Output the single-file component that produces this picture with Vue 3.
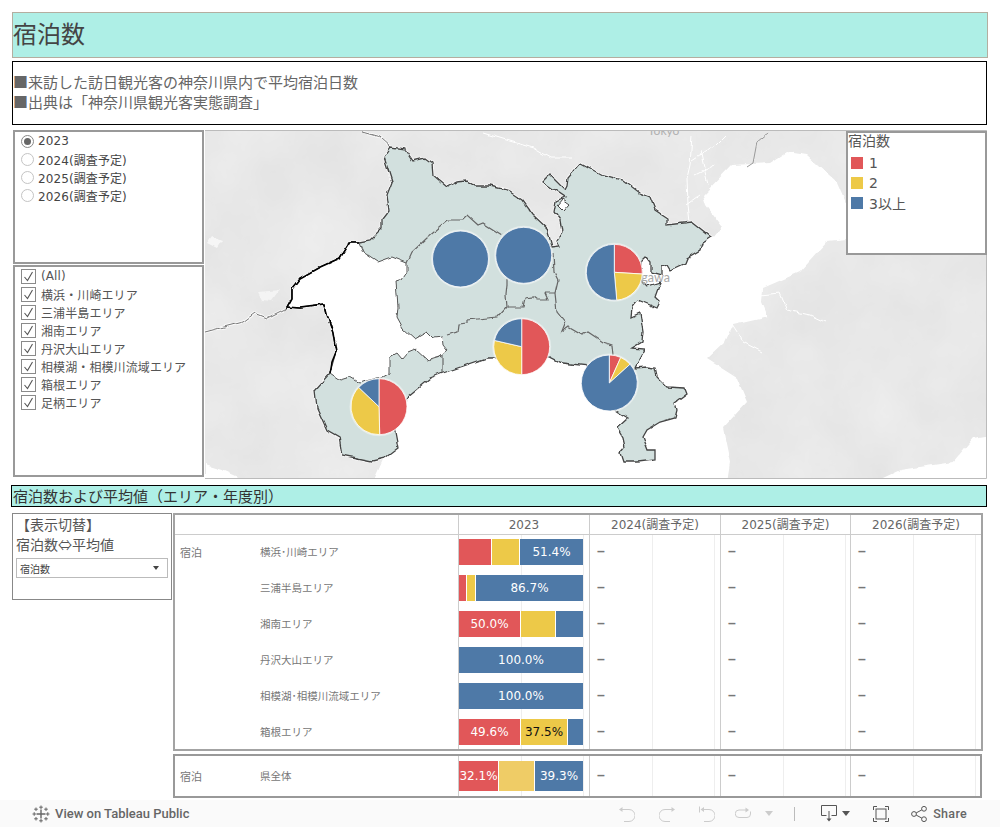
<script setup>
const years = ["2024(調査予定)", "2025(調査予定)", "2026(調査予定)"];

const areas = [
  "横浜・川崎エリア",
  "三浦半島エリア",
  "湘南エリア",
  "丹沢大山エリア",
  "相模湖・相模川流域エリア",
  "箱根エリア",
  "足柄エリア",
];

const legend = [
  { label: "1", color: "#e15759" },
  { label: "2", color: "#edc948" },
  { label: "3以上", color: "#4e79a7" },
];

const rows = [
  { group: "宿泊", name: "横浜･川崎エリア", segs: [{ w: 32, c: "red" }, { w: 27, c: "yellow" }, { w: 63, c: "blue", t: "51.4%" }] },
  { name: "三浦半島エリア", segs: [{ w: 7, c: "red" }, { w: 8, c: "yellow" }, { w: 107, c: "blue", t: "86.7%" }] },
  { name: "湘南エリア", segs: [{ w: 61, c: "red", t: "50.0%" }, { w: 34, c: "yellow" }, { w: 27, c: "blue" }] },
  { name: "丹沢大山エリア", segs: [{ w: 124, c: "blue", t: "100.0%" }] },
  { name: "相模湖･相模川流域エリア", segs: [{ w: 124, c: "blue", t: "100.0%" }] },
  { name: "箱根エリア", segs: [{ w: 61, c: "red", t: "49.6%" }, { w: 46, c: "yellow", t: "37.5%" }, { w: 15, c: "blue" }] },
];

const total = [{ w: 39, c: "red", t: "32.1%" }, { w: 35, c: "pale", t: "" }, { w: 48, c: "blue", t: "39.3%" }];

const colors = ["#e15759", "#edc948", "#4e79a7"];

const pies = [
  { x: 460.5, y: 259, parts: [0, 0, 100] },
  { x: 523.7, y: 255.3, parts: [0, 0, 100] },
  { x: 614.3, y: 272.3, parts: [26, 22.6, 51.4] },
  { x: 521.7, y: 346.7, parts: [50, 28.6, 21.4] },
  { x: 379, y: 406.7, parts: [49.6, 37.5, 12.9] },
  { x: 609.3, y: 383, parts: [6.7, 6.6, 86.7] },
];

const R = 28;

const slices = (pie) => {
  let from = 0;
  const out = [];
  pie.parts.forEach((p, i) => {
    if (!p) return;
    if (p === 100) {
      // a single arc with the same start and end draws nothing
      out.push({
        d: `M${pie.x} ${pie.y - R}A${R} ${R} 0 1 1 ${pie.x} ${pie.y + R}A${R} ${R} 0 1 1 ${pie.x} ${pie.y - R}Z`,
        fill: colors[i],
      });
      return;
    }
    const to = from + (p / 100) * Math.PI * 2;
    const x1 = pie.x + R * Math.sin(from);
    const y1 = pie.y - R * Math.cos(from);
    const x2 = pie.x + R * Math.sin(to);
    const y2 = pie.y - R * Math.cos(to);
    const large = p > 50 ? 1 : 0;
    out.push({
      d: `M${pie.x} ${pie.y}L${x1} ${y1}A${R} ${R} 0 ${large} 1 ${x2} ${y2}Z`,
      fill: colors[i],
    });
    from = to;
  });
  return out;
};

const kanagawa =
  "M359 242L370 240 382 228 382 220 389 211 387 195 392 182 384 157 391 147 405 149 413 161 425 158 432 163 433 175 447 187 457 182 467 181 475 186 490 186 507 190 522 200 533 215 547 228 552 247 560 246 557 240 562 232 560 220 554 212 556 201 565 197 543 182 550 175 565 190 567 186 568 178 581 163 603 175 623 180 640 193 650 197 655 210 667 218 667 225 692 222 711 237 702 243 700 250 687 258 685 263 670 270 667 265 662 267 662 275 651 272 651 262 646 256 641 261 642 282 647 287 660 283 655 297 660 302 657 308 650 305 638 300 632 307 631 317 640 313 643 332 642 342 632 348 645 349 638 362 635 368 647 367 655 368 657 377 667 387 685 388 687 393 675 402 677 410 675 418 660 422 647 430 643 437 648 450 655 450 655 460 638 462 623 462 620 453 625 447 623 438 617 428 628 418 618 412 600 400 590 366 562 363 550 357 487 358 443 373 430 378 413 392 407 397 395 410 395 432 398 448 385 458 372 461 342 455 339 437 327 430 317 408 315 390 330 373 336 352 333 333 328 317 325 305 300 308 287 307 292 298 292 288 300 278 318 268 340 258 350 242Z";

const hole =
  "M350 242L359 242 363 252 378 262 392 257 407 263 407 272 402 280 396 282 398 307 397 317 403 328 415 339 427 332 432 337 442 336 443 345 447 350 440 356 427 360 415 349 408 352 402 359 397 353 390 357 390 373 383 377 375 378 360 383 350 377 340 380 330 373 336 352 333 333 328 317 325 305 300 308 287 307 292 298 292 288 300 278 318 268 340 258Z";

const westEdge =
  "M359 242L350 242 340 258 318 268 300 278 292 288 292 298 287 307 300 308 325 305 328 317 333 333 336 352 332 362 330 373";

const water =
  "M713 237L722 226 706 205 703 195 732 165 770 163 787 152 807 155 837 182 847 205 847 240 827 242 800 272 763 288 762 302 768 317 733 325 725 342 707 359 737 378 747 402 723 428 730 462 727 482 373 482 382 462 395 432 420 370 560 340 640 250Z";

const inner = [
  "M407 263L412 252 427 238 448 220 462 220 467 215 478 225 483 223 502 235",
  "M507 278L507 285 506 295 507 307 498 317 467 320 467 323 458 324 457 332 447 335",
  "M507 307L523 307 525 298 533 297 537 300 547 300 544 293 555 293",
  "M553 252L554 272 558 280 555 293 557 312 565 322 561 332 568 327 582 335 588 332 603 342 612 345 613 355",
  "M442 355L442 373",
];
</script>

<template>
  <div class="page">
    <div class="title">宿泊数</div>

    <div class="desc">
      <div>■来訪した訪日観光客の神奈川県内で平均宿泊日数</div>
      <div>■出典は「神奈川県観光客実態調査」</div>
    </div>

    <div class="top-row">
      <div class="filters">
        <div class="filter-box radios">
          <label class="opt">
            <span class="radio on"></span>
            <span>2023</span>
          </label>
          <label v-for="y in years" :key="y" class="opt">
            <span class="radio"></span>
            <span>{{ y }}</span>
          </label>
        </div>
        <div class="filter-box checks">
          <label class="opt check-opt">
            <svg class="check" viewBox="0 0 15 15">
              <rect x="0.5" y="0.5" width="14" height="14" fill="#fff" stroke="#8a8a8a" />
              <path d="M3.5 8L6.5 11.5 11.5 3" fill="none" stroke="#555" stroke-width="1.1" />
            </svg>
            <span>(All)</span>
          </label>
          <label v-for="a in areas" :key="a" class="opt check-opt">
            <svg class="check" viewBox="0 0 15 15">
              <rect x="0.5" y="0.5" width="14" height="14" fill="#fff" stroke="#8a8a8a" />
              <path d="M3.5 8L6.5 11.5 11.5 3" fill="none" stroke="#555" stroke-width="1.1" />
            </svg>
            <span>{{ a }}</span>
          </label>
        </div>
      </div>

      <div class="map">
        <svg class="map-svg" viewBox="205 130 782 349" width="782" height="349">
          <defs>
            <filter id="terrain" x="0" y="0" width="100%" height="100%" color-interpolation-filters="sRGB">
              <feTurbulence type="fractalNoise" baseFrequency="0.014" numOctaves="5" seed="4" />
              <feColorMatrix
                type="matrix"
                values="0.05 0 0 0 0.885  0.05 0 0 0 0.885  0.05 0 0 0 0.885  0 0 0 0 1" />
            </filter>
            <filter id="wobble" x="-5%" y="-5%" width="110%" height="110%" color-interpolation-filters="sRGB">
              <feTurbulence type="fractalNoise" baseFrequency="0.09" numOctaves="2" seed="7" result="n" />
              <feDisplacementMap in="SourceGraphic" in2="n" scale="5" xChannelSelector="R" yChannelSelector="G" />
            </filter>
          </defs>
          <rect x="205" y="130" width="782" height="349" filter="url(#terrain)" />
          <g filter="url(#wobble)">
            <path :d="water" fill="#fff" />
            <path d="M205 465L225 471 243 479 243 484 205 484Z" fill="#fff" />
            <path d="M870 484L900 470 953 462 973 438 992 435 992 484Z" fill="#fff" />
            <g fill="none" stroke="#fff" stroke-width="1">
              <path d="M760 295L780 293 787 310 810 315 825 322" />
              <path d="M732 325L743 342 762 352" />
              <path d="M483 133L533 148 550 158 573 158" />
              <path d="M692 135L690 165 687 178 688 205 690 222" />
              <path d="M692 160L715 145 725 135M686 205L700 195M695 175L715 165M700 150L708 185" />
            </g>
            <path d="M212 236L222 240 217 248 207 243Z" fill="#f6f6f6" />
            <path d="M258 292L280 290 272 301 262 300Z" fill="#f4f4f4" />
            <path d="M747 167L753 163 757 142 768 133" fill="none" stroke="#999" />

            <g fill="none" stroke="#fff" stroke-width="3" opacity="0.7">
              <path d="M205 332L243 322 255 313 267 318 287 308" />
              <path d="M362 132L380 137 391 147" />
              <path :d="kanagawa" />
            </g>
            <path d="M205 332L243 322 255 313 267 318 287 308" fill="none" stroke="#777" />
            <path d="M362 132L380 137 391 147" fill="none" stroke="#777" />
            <path :d="kanagawa" fill="#d2e0de" stroke="#444" stroke-width="1.3" />
            <path :d="hole" fill="#fff" stroke="#555" />
            <path :d="westEdge" fill="none" stroke="#000" stroke-width="1.6" />
            <path d="M563 199L570 204 564 211 558 205Z" fill="#fff" stroke="#444" />
            <path v-for="d in inner" :key="d" :d="d" fill="none" stroke="#666" stroke-width="1.2" />
          </g>

          <text x="648" y="135" class="map-label">Tokyo</text>
          <text x="670" y="282" text-anchor="end" class="map-label kana">Kanagawa</text>

          <g v-for="(p, i) in pies" :key="i">
            <circle :cx="p.x" :cy="p.y" :r="R + 1.5" fill="#fff" opacity="0.4" />
            <path v-for="s in slices(p)" :key="s.d" :d="s.d" :fill="s.fill" stroke="#fff" stroke-width="0.8" />
          </g>
          <path d="M205 130.5H986.5V478.5H205" fill="none" stroke="#bbb" />
        </svg>

        <div class="legend">
          <div class="legend-title">宿泊数</div>
          <div v-for="l in legend" :key="l.label" class="legend-row">
            <span class="swatch" :style="{ background: l.color }"></span>
            <span>{{ l.label }}</span>
          </div>
        </div>
      </div>
    </div>

    <div class="section">宿泊数および平均値（エリア・年度別）</div>

    <div class="lower">
      <div class="switcher">
        <div class="switch-line">【表示切替】</div>
        <div class="switch-line">宿泊数⇔平均値</div>
        <div class="select">
          <span>宿泊数</span>
          <span class="caret"></span>
        </div>
      </div>

      <div class="tables">
        <div class="tbl">
          <div class="row head">
            <div class="names"></div>
            <div class="year">2023</div>
            <div v-for="y in years" :key="y" class="year">{{ y }}</div>
          </div>
          <div v-for="r in rows" :key="r.name" class="row body">
            <div class="names">
              <span class="group">{{ r.group }}</span>
              <span class="area">{{ r.name }}</span>
            </div>
            <div class="cell bars">
              <div
                v-for="s in r.segs"
                :key="s.c"
                class="seg"
                :class="s.c"
                :style="{ width: s.w + 'px' }">
                {{ s.t }}
              </div>
            </div>
            <div v-for="y in years" :key="y" class="cell dash">–</div>
          </div>
        </div>

        <div class="tbl tbl-total">
          <div class="row body total">
            <div class="names">
              <span class="group">宿泊</span>
              <span class="area">県全体</span>
            </div>
            <div class="cell bars">
              <div
                v-for="s in total"
                :key="s.c"
                class="seg"
                :class="s.c"
                :style="{ width: s.w + 'px' }">
                {{ s.t }}
              </div>
            </div>
            <div v-for="y in years" :key="y" class="cell dash">–</div>
          </div>
        </div>
      </div>
    </div>

    <div class="footer">
      <svg class="logo" width="18" height="18" viewBox="0 0 18 18" fill="none" stroke="#666">
        <path d="M9 4.5V13.5M4.5 9H13.5" stroke-width="1.4" />
        <path d="M9 .5V4M7.2 2.2H10.8M9 14V17.5M7.2 15.8H10.8M.5 9H4M2.2 7.2V10.8M14 9H17.5M15.8 7.2V10.8" />
        <path d="M4 2.5V6M2.2 4.2H5.8M14 2.5V6M12.2 4.2H15.8M4 12V15.5M2.2 13.8H5.8M14 12V15.5M12.2 13.8H15.8" />
      </svg>
      <span class="view-link">View on Tableau Public</span>

      <div class="tools">
        <svg class="ico first" width="16" height="16" viewBox="0 0 16 16" fill="none" stroke="#ccc">
          <path d="M2 3.5H10A5.5 5.5 0 0 1 10 15.5H5" />
          <path d="M0 3.5L3.5 1V6Z" fill="#ccc" stroke="none" />
        </svg>
        <svg class="ico gap24" width="16" height="16" viewBox="0 0 16 16" fill="none" stroke="#ccc">
          <path d="M14 3.5H6A5.5 5.5 0 0 0 6 15.5H11" />
          <path d="M16 3.5L12.5 1V6Z" fill="#ccc" stroke="none" />
        </svg>
        <svg class="ico gap24" width="16" height="16" viewBox="0 0 16 16" fill="none" stroke="#ccc">
          <path d="M3 3.5H10A5.5 5.5 0 0 1 10 15.5H5M.5 .5V6.5" />
          <path d="M1.5 3.5L5 1V6Z" fill="#ccc" stroke="none" />
        </svg>
        <svg class="ico gap20" width="16" height="16" viewBox="0 0 16 16" fill="none" stroke="#ccc">
          <path d="M11 4H4A3.5 3.5 0 0 0 4 11.5H12A3.5 3.5 0 0 0 15.5 8V5.5" />
          <path d="M14 4L10.5 1.5V6.5Z" fill="#ccc" stroke="none" />
        </svg>
        <span class="tri pale-tri"></span>
        <span class="sep"></span>
        <svg class="ico gap26" width="16" height="17" viewBox="0 0 16 17" fill="none" stroke="#555">
          <path d="M5.5 10.5H.5V.5H15.5V10.5H10.5M8 6V14" />
          <path d="M5.5 13.5H10.5L8 16.5Z" fill="#555" stroke="none" />
        </svg>
        <span class="tri dark-tri"></span>
        <svg class="ico gap23" width="16" height="16" viewBox="0 0 16 16" fill="none" stroke="#555">
          <path d="M.5 4V.5H4M12 .5H15.5V4M15.5 12V15.5H12M4 15.5H.5V12" />
          <rect x="3" y="3" width="10" height="10" />
        </svg>
        <svg class="ico gap22" width="16" height="16" viewBox="0 0 16 16" fill="none" stroke="#555">
          <circle cx="3" cy="8" r="2.4" />
          <circle cx="13" cy="2.8" r="2.4" />
          <circle cx="13" cy="13.2" r="2.4" />
          <path d="M5.2 6.9L10.8 3.9M5.2 9.1L10.8 12.1" />
        </svg>
        <span class="share">Share</span>
      </div>
    </div>
  </div>
</template>

<style scoped>
.page {
  width: 1000px;
  height: 827px;
  display: flex;
  flex-direction: column;
  overflow: hidden;
  background: #fff;
  font-family: "DejaVu Sans", "Noto Sans CJK JP", sans-serif;
  color: #555;
}
.title {
  box-sizing: border-box;
  margin: 12px 12px 0;
  height: 46px;
  border: 1px solid #b4aea0;
  background: #aeefe6;
  font-family: "Noto Sans CJK JP", sans-serif;
  font-size: 24px;
  line-height: 40px;
  color: #444;
}
.desc {
  box-sizing: border-box;
  margin: 3px 13px 0 12px;
  height: 64px;
  padding-top: 10px;
  border: 1px solid #000;
  font-family: "Noto Sans CJK JP", sans-serif;
  font-size: 15px;
  line-height: 20px;
  color: #666;
}
.top-row {
  display: flex;
  gap: 1px;
  margin: 5px 13px 0;
  height: 349px;
}
.filters {
  width: 191px;
  display: flex;
  flex-direction: column;
  gap: 1px;
}
.filter-box {
  box-sizing: border-box;
  border: 2px solid #999;
  background: #fff;
}
.radios {
  height: 134px;
  padding-left: 6px;
}
.checks {
  height: 212px;
  padding-left: 6px;
}
.opt {
  display: flex;
  align-items: center;
  height: 18px;
  font-size: 12px;
  letter-spacing: 0.1px;
  color: #444;
}
.radio {
  box-sizing: border-box;
  width: 13px;
  height: 13px;
  margin-right: 4px;
  border: 1px solid #c4c4c4;
  border-radius: 50%;
  background: #fff;
  display: flex;
  align-items: center;
  justify-content: center;
}
.radio.on {
  border-color: #888;
}
.radio.on::after {
  content: "";
  width: 7px;
  height: 7px;
  border-radius: 50%;
  background: #666;
}
.check {
  width: 15px;
  height: 15px;
  margin-right: 5px;
  flex: none;
}
.check-opt {
  color: #555;
}
.map {
  flex: 1;
  position: relative;
}
.map-svg {
  display: block;
}
.map-label {
  font-family: Lato, sans-serif;
  font-size: 12px;
  fill: #b0b0b0;
}
.kana {
  font-size: 12.5px;
  fill: #a8a8a8;
}
.legend {
  position: absolute;
  top: 1px;
  right: 0;
  box-sizing: border-box;
  width: 141px;
  height: 124px;
  border: 2px solid #999;
  background: #fff;
  font-size: 14px;
  color: #555;
}
.legend-title {
  font-family: "Noto Sans CJK JP", sans-serif;
  height: 17px;
  line-height: 15px;
  margin-bottom: 3px;
  color: #555;
}
.legend-row {
  display: flex;
  align-items: center;
  height: 20px;
}
.swatch {
  width: 12px;
  height: 12px;
  margin: 0 6px 0 3px;
}
.section {
  box-sizing: border-box;
  margin: 6px 13px 0 11px;
  height: 22px;
  padding-left: 1px;
  border: 1px solid #000;
  background: #aeefe6;
  font-family: "Noto Sans CJK JP", sans-serif;
  font-size: 15px;
  line-height: 19px;
  color: #333;
}
.lower {
  display: flex;
  gap: 1px;
  margin: 6px 0 0 12px;
}
.switcher {
  box-sizing: border-box;
  width: 160px;
  height: 87px;
  padding-left: 3px;
  border: 1px solid #888;
  font-family: "Noto Sans CJK JP", sans-serif;
  font-size: 14px;
  color: #555;
}
.switch-line {
  line-height: 20px;
}
.select {
  box-sizing: border-box;
  width: 152px;
  height: 20px;
  margin-top: 4px;
  padding: 0 8px 0 3px;
  border: 1px solid #bbb;
  display: flex;
  align-items: center;
  justify-content: space-between;
  font-size: 10px;
  color: #444;
}
.caret {
  width: 0;
  height: 0;
  border-left: 3px solid transparent;
  border-right: 3px solid transparent;
  border-top: 4px solid #444;
}
.tables {
  width: 810px;
}
.tbl {
  box-sizing: border-box;
  height: 238px;
  overflow: hidden;
  border: 2px solid #a3a3a3;
}
.tbl-total {
  width: 809px;
  height: 44px;
  margin-top: 3px;
  border-color: #999;
}
.row {
  display: grid;
  grid-template-columns: 284px 131px 131px 130px 1fr;
}
.head {
  height: 20px;
  border-bottom: 1px solid #ccc;
  box-sizing: border-box;
}
.names {
  box-sizing: border-box;
  display: flex;
  align-items: center;
  padding: 0 0 3px 5px;
  border-right: 1px solid #ccc;
  font-family: "Noto Sans CJK JP", sans-serif;
  font-size: 10.5px;
  color: #777;
}
.head .names {
  padding: 0;
}
.total .names {
  padding-bottom: 1px;
}
.group {
  width: 80px;
  font-size: 11px;
}
.year {
  box-sizing: border-box;
  border-right: 1px solid #ccc;
  text-align: center;
  font-size: 12px;
  line-height: 20px;
  color: #666;
}
.year:last-child {
  border-right: none;
}
.body {
  height: 36px;
}
.cell {
  box-sizing: border-box;
  border-right: 1px solid #ccc;
  background-image: linear-gradient(#eee, #eee), linear-gradient(#eee, #eee);
  background-size: 1px 100%, 1px 100%;
  background-position: 62px 0, 124px 0;
  background-repeat: no-repeat;
}
.cell:last-child {
  border-right: none;
}
.bars {
  display: flex;
  gap: 1px;
  padding-top: 4px;
  align-items: flex-start;
}
.seg {
  height: 26px;
  display: flex;
  align-items: center;
  justify-content: center;
  overflow: hidden;
  white-space: nowrap;
  font-size: 12px;
  color: #fff;
}
.red {
  background: #e15759;
}
.yellow {
  background: #edc948;
  color: #111;
}
.pale {
  background: #efcc66;
}
.blue {
  background: #4e79a7;
}
.total {
  height: 40px;
}
.total .bars {
  padding-top: 5px;
}
.total .seg {
  height: 30px;
}
.dash {
  padding: 4px 0 0 7px;
  font-family: "Liberation Sans", sans-serif;
  font-size: 14px;
  font-weight: 700;
  line-height: 24px;
  color: #777;
}
.total .dash {
  padding-top: 7px;
}
.footer {
  margin-top: auto;
  height: 27px;
  display: flex;
  align-items: center;
  padding-left: 32px;
  background: #fafafa;
}
.logo {
  flex: none;
}
.view-link {
  margin-left: 5px;
  font-family: Roboto, sans-serif;
  font-size: 13px;
  font-weight: 500;
  color: #666;
}
.tools {
  margin-left: auto;
  display: flex;
  align-items: center;
  padding-right: 33px;
}
.ico {
  flex: none;
}
.gap24 {
  margin-left: 24px;
}
.gap20 {
  margin-left: 20px;
}
.gap26 {
  margin-left: 26px;
}
.gap23 {
  margin-left: 23px;
}
.gap22 {
  margin-left: 22px;
}
.tri {
  width: 0;
  height: 0;
  border-left: 4px solid transparent;
  border-right: 4px solid transparent;
}
.pale-tri {
  margin-left: 14px;
  border-top: 5px solid #ccc;
}
.dark-tri {
  margin-left: 5px;
  border-top: 5px solid #555;
}
.sep {
  width: 1px;
  height: 14px;
  margin-left: 21px;
  background: #bbb;
}
.share {
  margin-left: 6px;
  font-family: Roboto, sans-serif;
  font-size: 12.5px;
  font-weight: 500;
  letter-spacing: 0.3px;
  color: #666;
}
</style>
